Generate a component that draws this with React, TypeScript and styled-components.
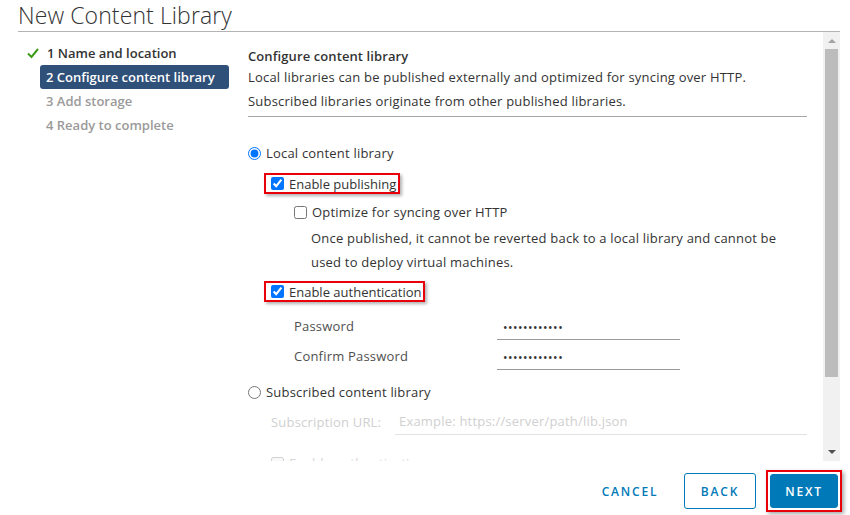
import React from "react";
import styled, { createGlobalStyle } from "styled-components";

const Global = createGlobalStyle`
  html, body { margin: 0; padding: 0; background: #fff; }
  body { font-family: "Open Sans", "Noto Sans", sans-serif; color: #333; }
  * { box-sizing: border-box; }
`;

const Page = styled.div`
  width: 850px;
  height: 515px;
  display: flex;
  flex-direction: column;
  overflow: hidden;
  background: #fff;
`;

const Title = styled.div`
  margin: 0 10px 0 18px;
  height: 32px;
  border-bottom: 1px solid #b3b3b3;
  font-size: 23px;
  font-weight: 300;
  line-height: 30px;
  color: #333;
  letter-spacing: 0.1px;
`;

const Body = styled.div`
  display: flex;
  height: 429px;
  margin-right: 10px;
`;

const Sidebar = styled.div`
  width: 248px;
  flex: none;
  padding: 9px 0 0 26px;
  display: flex;
  flex-direction: column;
`;

const Step = styled.div<{ $state: "done" | "active" | "todo" }>`
  display: flex;
  align-items: center;
  height: 24px;
  width: 189px;
  margin-left: ${(p) => (p.$state === "done" ? "0" : "14px")};
  padding-left: 6px;
  border-radius: 3px;
  font-size: 13px;
  font-weight: 600;
  white-space: nowrap;
  color: ${(p) =>
    p.$state === "active" ? "#fff" : p.$state === "done" ? "#333" : "#9a9a9a"};
  background: ${(p) => (p.$state === "active" ? "#2f5078" : "transparent")};
`;

const DoneStep = styled(Step)`
  padding-left: 0;
  width: auto;
`;

const CheckIcon = styled.svg`
  width: 12px;
  height: 12px;
  margin: 0 8px 0 1px;
  flex: none;
`;

const Content = styled.div`
  flex: 1;
  overflow: hidden;
  padding: 15px 16px 0 0;
  font-size: 13px;
  letter-spacing: 0.2px;
  color: #333;
`;

const Heading = styled.div`
  font-weight: 600;
  line-height: 18px;
  letter-spacing: 0.1px;
`;

const Para = styled.div`
  line-height: 24px;
`;

const Separator = styled.div`
  margin-top: 3px;
  border-top: 1px solid #a6a6a6;
`;

const Row = styled.label<{ $indent?: number; $top?: number; $faded?: boolean }>`
  display: flex;
  align-items: center;
  height: 24px;
  margin-left: ${(p) => p.$indent ?? 0}px;
  margin-top: ${(p) => p.$top ?? 0}px;
  color: ${(p) => (p.$faded ? "#d6d6d6" : "#333")};
  white-space: nowrap;
`;

const Radio = styled.input.attrs({ type: "radio" })`
  margin: 0 5px 0 0;
  width: 13px;
  height: 13px;
  accent-color: #0075ff;
`;

const Check = styled.input.attrs({ type: "checkbox" })`
  margin: 0 5px 0 0;
  width: 13px;
  height: 13px;
  accent-color: #0075ff;
`;

const Highlight = styled.div<{ $top: number }>`
  display: flex;
  align-items: center;
  width: fit-content;
  margin-left: 16px;
  margin-top: ${(p) => p.$top}px;
  height: 21px;
  padding: 0 2px 0 5px;
  border: 2px solid #e8000b;
  box-shadow: 2px 2px 3px rgba(0, 0, 0, 0.3);
  white-space: nowrap;
  letter-spacing: 0;
`;

const Note = styled.div`
  margin-left: 63px;
  line-height: 24px;
  margin-top: 2px;
`;

const Field = styled.div<{ $top?: number }>`
  display: grid;
  grid-template-columns: 203px 183px;
  align-items: center;
  height: 30px;
  margin-left: 46px;
  margin-top: ${(p) => p.$top ?? 0}px;
`;

const FieldLabel = styled.span`
  color: #4f4f4f;
`;

const Input = styled.div`
  height: 24px;
  margin-top: 4px;
  padding: 0 6px;
  border-bottom: 1px solid #9a9a9a;
  display: flex;
  align-items: center;
  font-size: 12px;
  letter-spacing: 0.5px;
  color: #333;
`;

const UrlRow = styled.div`
  display: grid;
  grid-template-columns: 124px 1fr;
  align-items: center;
  height: 26px;
  margin: 4px 0 0 23px;
  color: #d0d0d0;
  white-space: nowrap;
`;

const UrlInput = styled.div`
  height: 27px;
  border-bottom: 1px solid #e3e3e3;
  padding-left: 4px;
  display: flex;
  align-items: center;
  color: #d0d0d0;
`;

const Scrollbar = styled.div`
  width: 17px;
  flex: none;
  background: #f1f1f1;
  display: flex;
  flex-direction: column;
  align-items: center;
`;

const Arrow = styled.div<{ $down?: boolean }>`
  width: 0;
  height: 0;
  border-left: 4px solid transparent;
  border-right: 4px solid transparent;
  ${(p) =>
    p.$down
      ? "border-top: 4px solid #505050; margin-top: auto; margin-bottom: 7px;"
      : "border-bottom: 4px solid #a3a3a3; margin-top: 7px;"}
`;

const Thumb = styled.div`
  width: 13px;
  height: 328px;
  margin-top: 6px;
  background: #bcbcbc;
`;

const Footer = styled.div`
  flex: 1;
  display: flex;
  justify-content: flex-end;
  align-items: center;
  gap: 10px;
  padding: 6px 12px 0 0;
`;

const Button = styled.button<{ $variant: "flat" | "outline" | "solid" }>`
  height: 36px;
  min-width: 72px;
  padding: 0 12px;
  border-radius: 3px;
  font-family: inherit;
  font-size: 12px;
  font-weight: 600;
  letter-spacing: 1.8px;
  cursor: pointer;
  border: 1px solid
    ${(p) => (p.$variant === "flat" ? "transparent" : "#0079b8")};
  background: ${(p) => (p.$variant === "solid" ? "#0079b8" : "transparent")};
  color: ${(p) => (p.$variant === "solid" ? "#fff" : "#0079b8")};
`;

const FlatButton = styled(Button)`
  min-width: 84px;
  margin-right: 2px;
`;

const RedFrame = styled.div`
  padding: 2px;
  border: 2px solid #e8000b;
  box-shadow: 2px 2px 4px rgba(0, 0, 0, 0.35);
  display: flex;
  margin-right: -4px;
`;

const NextButton = styled(Button)`
  width: 68px;
  min-width: 0;
  height: 34px;
  padding: 0;
`;

export default function App() {
  return (
    <Page>
      <Global />
      <Title>New Content Library</Title>
      <Body>
        <Sidebar>
          <DoneStep $state="done">
            <CheckIcon viewBox="0 0 12 12">
              <path d="M1 6.5 L4.5 10 L11 2" fill="none" stroke="#3f9c19" strokeWidth="2" />
            </CheckIcon>
            1 Name and location
          </DoneStep>
          <Step $state="active">2 Configure content library</Step>
          <Step $state="todo">3 Add storage</Step>
          <Step $state="todo">4 Ready to complete</Step>
        </Sidebar>
        <Content>
          <Heading>Configure content library</Heading>
          <Para>Local libraries can be published externally and optimized for syncing over HTTP.</Para>
          <Para>Subscribed libraries originate from other published libraries.</Para>
          <Separator />
          <Row $top={24}>
            <Radio name="lib" defaultChecked />
            Local content library
          </Row>
          <Highlight $top={8}>
            <Check defaultChecked />
            Enable publishing
          </Highlight>
          <Row $indent={46} $top={6}>
            <Check />
            Optimize for syncing over HTTP
          </Row>
          <Note>
            Once published, it cannot be reverted back to a local library and cannot be
            <br />
            used to deploy virtual machines.
          </Note>
          <Highlight $top={7}>
            <Check defaultChecked />
            Enable authentication
          </Highlight>
          <Field $top={9}>
            <FieldLabel>Password</FieldLabel>
            <Input>••••••••••••</Input>
          </Field>
          <Field>
            <FieldLabel>Confirm Password</FieldLabel>
            <Input>••••••••••••</Input>
          </Field>
          <Row $top={9}>
            <Radio name="lib" />
            Subscribed content library
          </Row>
          <UrlRow>
            <span>Subscription URL:</span>
            <UrlInput>Example: https://server/path/lib.json</UrlInput>
          </UrlRow>
          <Row $indent={23} $top={17} $faded>
            <Check disabled />
            Enable authentication
          </Row>
        </Content>
        <Scrollbar>
          <Arrow />
          <Thumb />
          <Arrow $down />
        </Scrollbar>
      </Body>
      <Footer>
        <FlatButton $variant="flat">CANCEL</FlatButton>
        <Button $variant="outline">BACK</Button>
        <RedFrame>
          <NextButton $variant="solid">NEXT</NextButton>
        </RedFrame>
      </Footer>
    </Page>
  );
}
